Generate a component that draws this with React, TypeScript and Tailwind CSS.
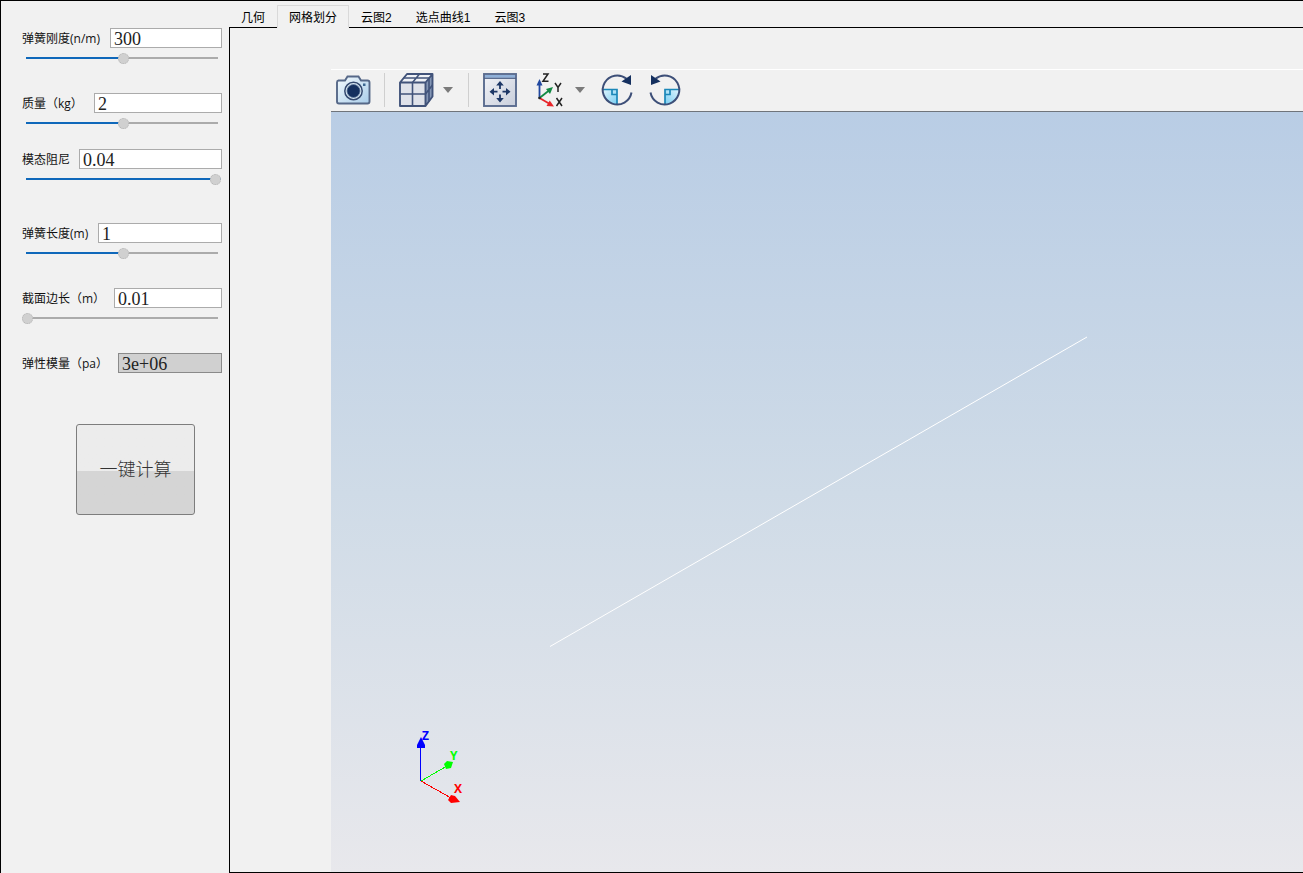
import React, { useState } from 'react';

const tabs = ['几何', '网格划分', '云图2', '选点曲线1', '云图3'];

type FieldProps = {
  id: string;
  label: string;
  value: string;
  slider?: number;
  inputClass: string;
  className?: string;
};

function Field({ id, label, value, slider, inputClass, className = '' }: FieldProps) {
  const [text, setText] = useState(value);
  const [pos, setPos] = useState(slider ?? 0);
  const track = `linear-gradient(to right, transparent 4px, #0f68ba 4px, #0f68ba ${pos}%, #ababab ${pos}%, #ababab calc(100% - 3px), transparent calc(100% - 3px))`;

  return (
    <div className={className}>
      <div className="flex items-center justify-between h-5">
        <label htmlFor={id} className="pt-[2px] text-[12px] leading-5 whitespace-nowrap text-[#111]">{label}</label>
        <input
          id={id}
          type="text"
          value={text}
          readOnly={slider === undefined}
          onChange={(e) => setText(e.target.value)}
          className={`h-5 border pl-[3px] pt-[2px] text-[18px] leading-4 text-[#222] rounded-none outline-none font-['Liberation_Serif',serif] ${inputClass}`}
        />
      </div>
      {slider !== undefined && (
        <div className="pr-px">
          <input
            type="range"
            aria-label={label}
            value={pos}
            onChange={(e) => setPos(Number(e.target.value))}
            style={{ backgroundImage: track }}
            className="block w-full h-5 appearance-none bg-transparent bg-no-repeat bg-center bg-[length:100%_2px] outline-none [&::-webkit-slider-thumb]:appearance-none [&::-webkit-slider-thumb]:w-[11px] [&::-webkit-slider-thumb]:h-[11px] [&::-webkit-slider-thumb]:rounded-full [&::-webkit-slider-thumb]:bg-[#d0d0d0] [&::-webkit-slider-thumb]:border [&::-webkit-slider-thumb]:border-dotted [&::-webkit-slider-thumb]:border-[#b4b4b4]"
          />
        </div>
      )}
    </div>
  );
}

function CameraIcon() {
  return (
    <svg width="36" height="36" viewBox="0 0 36 36">
      <defs>
        <linearGradient id="cam" x1="0" y1="0" x2="1" y2="1">
          <stop offset="0" stopColor="#f4fafd" />
          <stop offset="1" stopColor="#a9cdea" />
        </linearGradient>
      </defs>
      <path d="M3.500 8.500h6.500l2.500-4h11l2.500 4H32.500a2 2 0 0 1 2 2V29.500a2 2 0 0 1-2 2H4a2 2 0 0 1-2-2V10.500a2 2 0 0 1 1.500-2z" fill="url(#cam)" stroke="#566888" strokeWidth="1.900" />
      <circle cx="18.500" cy="19" r="8.700" fill="#dcebf5" stroke="#34496f" strokeWidth="1.500" />
      <circle cx="18.500" cy="19" r="6.500" fill="#15305f" stroke="#5b7598" strokeWidth="0.800" />
      <rect x="28" y="11.500" width="2.500" height="2.500" fill="#3b6690" />
    </svg>
  );
}

function CubeIcon() {
  return (
    <svg width="36" height="36" viewBox="0 0 36 36">
      <path d="M2 10.500L9 2H34.500L27.500 10.500z" fill="#eef1f6" />
      <path d="M2 10.500H27.500V34H2z" fill="#dfe2ea" />
      <path d="M27.500 10.500L34.500 2V24.500L27.500 34z" fill="#8496b5" />
      <g fill="none" stroke="#41537a" strokeWidth="1.900">
        <path d="M2 10.500H27.500V34H2zM2 10.500L9 2H34.500L27.500 10.500M34.500 2V24.500L27.500 34" strokeLinejoin="round" />
        <path d="M14.500 34V10.500L21.500 2M2 22H27.500L34.500 13M5.500 6H31V29.500" strokeWidth="1.600" />
      </g>
    </svg>
  );
}

function FitIcon() {
  return (
    <svg width="36" height="36" viewBox="0 0 36 36">
      <defs>
        <linearGradient id="fit" x1="0" y1="0" x2="1" y2="1">
          <stop offset="0" stopColor="#f3f4f8" />
          <stop offset="1" stopColor="#c8cedb" />
        </linearGradient>
      </defs>
      <rect x="2" y="2" width="32" height="32" fill="url(#fit)" stroke="#5a6c8f" strokeWidth="1.900" />
      <rect x="3" y="3" width="30" height="2.800" fill="#8fb0d8" />
      <path d="M2 6.300H34" stroke="#4b5f85" strokeWidth="1.200" />
      <g fill="#1d3766">
        <path d="M18 9l3.800 4.500h-7.600zM18 30.500l3.800-4.500h-7.600zM7.500 19.700l4.500-3.800v7.600zM28.500 19.700l-4.500-3.800v7.600z" />
        <path d="M17.100 13h1.800v4h-1.800zM17.100 22.500h1.800V27h-1.800zM11 18.800h4.500v1.800H11zM20.500 18.800H25v1.800h-4.500z" />
      </g>
    </svg>
  );
}

function AxesIcon() {
  return (
    <svg width="32" height="40" viewBox="0 0 32 40">
      <path d="M4.500 28V13" stroke="#2148a0" strokeWidth="1.800" />
      <path d="M4.500 9l3 6.500h-6z" fill="#2148a0" />
      <path d="M4.500 28L14 20.500" stroke="#128a43" strokeWidth="1.800" />
      <path d="M18 17l-3 7-4-5z" fill="#128a43" />
      <path d="M4.500 28L14 33.500" stroke="#e8252a" strokeWidth="1.800" />
      <path d="M19 36.500l-7.500-.5 3.200-5.500z" fill="#e8252a" />
      <circle cx="4.500" cy="28" r="1.300" fill="#222" />
      <g fill="none" stroke="#222" strokeWidth="1.500">
        <path d="M8 4H13L8 11.200H13.500" />
        <path d="M20 13l3 4.500 3-4.500M23 17v5" />
        <path d="M21.500 28l5.500 8M27 28l-5.500 8" />
      </g>
    </svg>
  );
}

function RotateIcon({ id, flip = false }: { id: string; flip?: boolean }) {
  return (
    <svg width="34" height="36" viewBox="0 0 34 36" className={flip ? '-scale-x-100' : ''}>
      <defs>
        <linearGradient id={id} x1="0" y1="0" x2="1" y2="1">
          <stop offset="0" stopColor="#dff4fc" />
          <stop offset="1" stopColor="#77cdf2" />
        </linearGradient>
      </defs>
      <path d="M2.500 18H17V33A15 15 0 0 1 2.500 18z" fill={`url(#${id})`} />
      <path d="M2.500 17.500H17V33M12 18v4.500h5" fill="none" stroke="#1b87b8" strokeWidth="1.700" />
      <path d="M31.500 20.500A14.500 14.500 0 1 1 26.500 6.800" fill="none" stroke="#3d4f78" strokeWidth="2" />
      <path d="M31 3V13L21.500 9.500z" fill="#15305f" />
    </svg>
  );
}

function Caret() {
  return (
    <svg width="10" height="6" viewBox="0 0 10 6">
      <path d="M0 0h10L5 6z" fill="#7b7b7b" />
    </svg>
  );
}

function Toolbar() {
  return (
    <div role="toolbar" className="flex items-center h-[43px] border-t border-t-white border-b border-b-[#6f747b] pl-1 pb-px">
      <button aria-label="截图"><CameraIcon /></button>
      <span className="w-px h-[34px] bg-[#cfcfcf] mx-[13px]" />
      <button aria-label="显示方式" className="flex items-center gap-[9px]"><CubeIcon /><Caret /></button>
      <span className="w-px h-[34px] bg-[#cfcfcf] ml-[15px] mr-[13px]" />
      <button aria-label="适应窗口"><FitIcon /></button>
      <button aria-label="视图方向" className="flex items-center gap-[8px] ml-[17px]"><AxesIcon /><Caret /></button>
      <button aria-label="顺时针旋转" className="ml-[15px]"><RotateIcon id="cw" /></button>
      <button aria-label="逆时针旋转" className="ml-[14px]"><RotateIcon id="ccw" flip /></button>
    </div>
  );
}

function Scene() {
  return (
    <svg viewBox="0 0 972 760" className="w-full h-full" preserveAspectRatio="xMinYMax meet">
      <path d="M219 534.500L756 225" stroke="#fff" strokeWidth="1" />
      <g shapeRendering="crispEdges">
        <path d="M89.500 669V634" stroke="#00f" />
        <path d="M90 669L116 654" stroke="#0f0" />
        <path d="M90 669L120 686" stroke="#f00" />
      </g>
      <path d="M90 625l4 8v3h-8v-3z" fill="#00f" />
      <path d="M113 652l3-3 6 1-2 6-5 1z" fill="#0f0" />
      <path d="M117 688l3-5 4 1 5 6-9 1z" fill="#f00" />
      <g fontSize="12" fontWeight="700" fontFamily="'Open Sans', sans-serif">
        <text x="91" y="628" fill="#00f">Z</text>
        <text x="119" y="648" fill="#0f0">Y</text>
        <text x="123" y="681" fill="#f00">X</text>
      </g>
    </svg>
  );
}

export default function App() {
  const [active, setActive] = useState(1);

  return (
    <div className="min-h-screen flex bg-[#f1f1f1] border-l border-t border-black font-['Open_Sans','Noto_Sans_CJK_SC',sans-serif]">
      <aside className="w-[227px] shrink-0 pl-[21px] pr-[6px] pt-[27px]">
        <Field id="stiffness" label="弹簧刚度(n/m)" value="300" slider={51} inputClass="w-28 bg-white border-[#ababab]" />
        <Field id="mass" label="质量（kg）" value="2" slider={51} inputClass="w-32 bg-white border-[#ababab]" className="mt-[25px]" />
        <Field id="damping" label="模态阻尼" value="0.04" slider={100} inputClass="w-[143px] bg-white border-[#ababab]" className="mt-4" />
        <Field id="length" label="弹簧长度(m)" value="1" slider={51} inputClass="w-[124px] bg-white border-[#ababab]" className="mt-[34px]" />
        <Field id="section" label="截面边长（m）" value="0.01" slider={0} inputClass="w-[108px] bg-white border-[#ababab]" className="mt-[25px]" />
        <Field id="modulus" label="弹性模量（pa）" value="3e+06" inputClass="w-[104px] bg-[#d0d0d0] border-[#8a8a8a]" className="mt-[25px]" />
        <button className="block ml-[54px] mt-[51px] pb-[2px] w-[119px] h-[91px] rounded-[3px] border border-[#7d7d7d] bg-linear-to-b from-[#ececec] from-52% to-[#d5d5d5] to-52% text-[18px] font-light text-[#333] font-['Noto_Sans_CJK_SC',sans-serif]">
          一键计算
        </button>
      </aside>

      <main className="flex-1 min-w-0 flex flex-col">
        <div role="tablist" className="flex pt-1 pl-px font-['Liberation_Sans','Noto_Sans_CJK_SC',sans-serif]">
          {tabs.map((tab, i) => (
            <button
              key={tab}
              role="tab"
              aria-selected={i === active}
              onClick={() => setActive(i)}
              className={`h-[23px] -mb-px px-[11px] pt-[2px] border text-[12px] leading-5 text-black ${
                i === active ? 'border-[#d9d9d9] border-b-[#f1f1f1] bg-[#f1f1f1] relative' : 'border-transparent'
              }`}
            >
              {tab}
            </button>
          ))}
        </div>
        <div className="flex-1 flex ml-px border-l border-t border-b border-black pt-[41px] pl-[101px]">
          <section className="flex-1 min-w-0 flex flex-col">
            <Toolbar />
            <div className="flex-1 min-h-0 bg-linear-to-b from-[#b9cde5] via-[#cfdbe7] to-[#e8e8ec]">
              <Scene />
            </div>
          </section>
        </div>
      </main>
    </div>
  );
}
